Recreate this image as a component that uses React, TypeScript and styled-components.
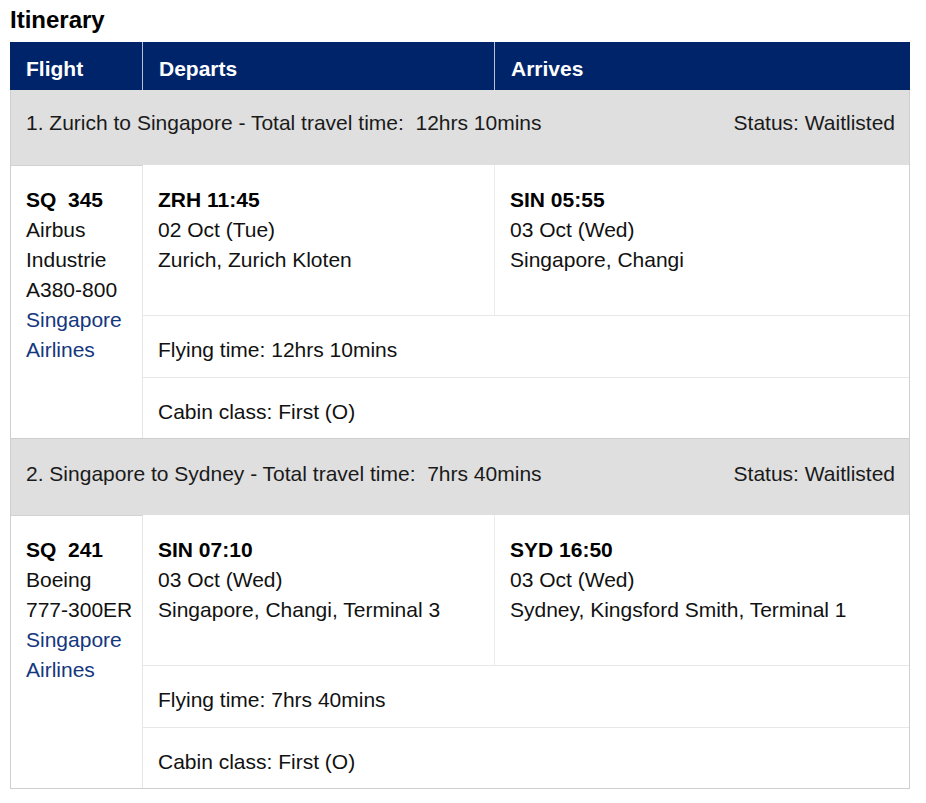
import React from "react";
import styled, { createGlobalStyle } from "styled-components";

const GlobalStyle = createGlobalStyle`
  html, body {
    margin: 0;
    padding: 0;
    background: #fff;
    font-family: "Liberation Sans", Arial, sans-serif;
    color: #111;
  }
`;

interface Segment {
  id: number;
  route: string;
  travelTime: string;
  status: string;
  flightNo: string;
  aircraft: string[];
  airline: string[];
  depart: { code: string; time: string; date: string; place: string };
  arrive: { code: string; time: string; date: string; place: string };
  flyingTime: string;
  cabin: string;
}

const segments: Segment[] = [
  {
    id: 1,
    route: "Zurich to Singapore",
    travelTime: "12hrs 10mins",
    status: "Waitlisted",
    flightNo: "SQ\u00a0 345",
    aircraft: ["Airbus", "Industrie", "A380-800"],
    airline: ["Singapore", "Airlines"],
    depart: { code: "ZRH", time: "11:45", date: "02 Oct (Tue)", place: "Zurich, Zurich Kloten" },
    arrive: { code: "SIN", time: "05:55", date: "03 Oct (Wed)", place: "Singapore, Changi" },
    flyingTime: "12hrs 10mins",
    cabin: "First (O)",
  },
  {
    id: 2,
    route: "Singapore to Sydney",
    travelTime: "7hrs 40mins",
    status: "Waitlisted",
    flightNo: "SQ\u00a0 241",
    aircraft: ["Boeing", "777-300ER"],
    airline: ["Singapore", "Airlines"],
    depart: { code: "SIN", time: "07:10", date: "03 Oct (Wed)", place: "Singapore, Changi, Terminal 3" },
    arrive: { code: "SYD", time: "16:50", date: "03 Oct (Wed)", place: "Sydney, Kingsford Smith, Terminal 1" },
    flyingTime: "7hrs 40mins",
    cabin: "First (O)",
  },
];

export default function App() {
  return (
    <Page>
      <GlobalStyle />
      <Title>Itinerary</Title>
      <Table>
        <Header>
          <HeadCell>Flight</HeadCell>
          <HeadCell $divider>Departs</HeadCell>
          <HeadCell $divider>Arrives</HeadCell>
        </Header>
        {segments.map((seg, i) => (
          <React.Fragment key={seg.id}>
            <Summary $first={i === 0}>
              <span>
                {seg.id}. {seg.route} - Total travel time:&nbsp; {seg.travelTime}
              </span>
              <span>Status: {seg.status}</span>
            </Summary>
            <Body>
              <FlightCell>
                <Bold>{seg.flightNo}</Bold>
                {seg.aircraft.map((a) => (
                  <Line key={a}>{a}</Line>
                ))}
                {seg.airline.map((a) => (
                  <Airline key={a}>{a}</Airline>
                ))}
              </FlightCell>
              <Details>
                <TimeCell>
                  <Bold>
                    {seg.depart.code} {seg.depart.time}
                  </Bold>
                  <Line>{seg.depart.date}</Line>
                  <Line>{seg.depart.place}</Line>
                </TimeCell>
                <TimeCell $divider>
                  <Bold>
                    {seg.arrive.code} {seg.arrive.time}
                  </Bold>
                  <Line>{seg.arrive.date}</Line>
                  <Line>{seg.arrive.place}</Line>
                </TimeCell>
                <InfoRow $height={62}>Flying time: {seg.flyingTime}</InfoRow>
                <InfoRow $height={61}>Cabin class: {seg.cabin}</InfoRow>
              </Details>
            </Body>
          </React.Fragment>
        ))}
      </Table>
    </Page>
  );
}

const Page = styled.div`
  padding: 5px 16px 14px 10px;
  width: 900px;
`;

const Title = styled.h2`
  margin: 0;
  height: 37px;
  font-size: 24px;
  line-height: 30px;
  font-weight: 700;
  color: #000;
`;

const Table = styled.div`
  width: 900px;
  box-sizing: border-box;
  border-left: 1px solid #cfcfcf;
  border-right: 1px solid #cfcfcf;
  border-bottom: 1px solid #cfcfcf;
  font-size: 21px;
`;

const Header = styled.div`
  display: grid;
  grid-template-columns: 132px 352px 1fr;
  height: 48px;
  background: #00246a;
  margin: 0 -1px;
`;

const HeadCell = styled.div<{ $divider?: boolean }>`
  display: flex;
  align-items: center;
  padding: 6px 16px 0;
  color: #fff;
  font-weight: 700;
  font-size: 21px;
  border-left: ${(p) => (p.$divider ? "1px solid #b9bfcc" : "none")};
`;

const Summary = styled.div<{ $first: boolean }>`
  display: flex;
  justify-content: space-between;
  box-sizing: border-box;
  height: ${(p) => (p.$first ? "75px" : "77px")};
  padding: ${(p) => (p.$first ? "18px" : "20px")} 14px 0 15px;
  line-height: 30px;
  background: #dfdfdf;
  border-top: ${(p) => (p.$first ? "none" : "1px solid #cdcdcd")};
  color: #1a1a1a;
`;

const Body = styled.div`
  display: grid;
  grid-template-columns: 132px 1fr;
`;

const FlightCell = styled.div`
  box-sizing: border-box;
  padding: 19px 6px 0 15px;
  border-top: 1px solid #d2d2d2;
  border-right: 1px solid #e6e6e6;
  line-height: 30px;
  display: flex;
  flex-direction: column;
`;

const Details = styled.div`
  display: grid;
  grid-template-columns: 351px 1fr;
`;

const TimeCell = styled.div<{ $divider?: boolean }>`
  box-sizing: border-box;
  height: 150px;
  padding: 20px 15px 0;
  line-height: 30px;
  display: flex;
  flex-direction: column;
  border-left: ${(p) => (p.$divider ? "1px solid #ececec" : "none")};
`;

const InfoRow = styled.div<{ $height: number }>`
  grid-column: 1 / -1;
  box-sizing: border-box;
  height: ${(p) => p.$height}px;
  padding: 19px 15px 0;
  line-height: 30px;
  border-top: 1px solid #e8e8e8;
`;

const Bold = styled.div`
  font-weight: 700;
  color: #000;
`;

const Line = styled.div`
  color: #111;
`;

const Airline = styled.div`
  color: #14377d;
`;
